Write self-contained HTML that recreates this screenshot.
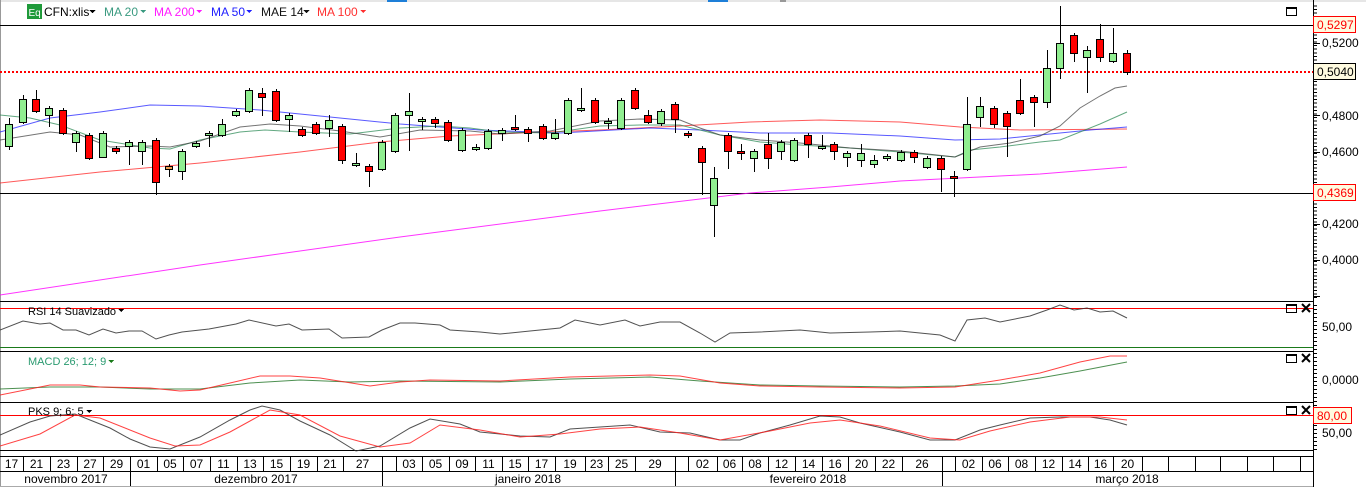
<!DOCTYPE html>
<html><head><meta charset="utf-8"><style>
html,body{margin:0;padding:0;background:#fff;width:1366px;height:487px;overflow:hidden;font-family:"Liberation Sans",Arial,sans-serif}
svg text{font-family:"Liberation Sans",Arial,sans-serif;font-size:12px}
</style></head><body>
<svg id="s" width="1366" height="487" xmlns="http://www.w3.org/2000/svg" shape-rendering="crispEdges">
<rect x="0" y="0" width="1366" height="2" fill="#e6e6e6"/>
<rect x="387" y="0" width="20" height="2" fill="#1e7fd8"/>
<rect x="708" y="0" width="20" height="2" fill="#1e7fd8"/>
<rect x="780" y="0" width="6" height="2" fill="#999"/>
<rect x="0" y="0" width="1" height="487" fill="#999"/>
<rect x="27" y="4" width="15" height="15" fill="#1f9a3a"/>
<text x="28.5" y="16" fill="#fff" style="font-size:10px">Eq</text>
<text x="44" y="16" fill="#000">CFN:xlis</text><path d="M89 10h7l-3.5 3z" fill="#000"/>
<text x="104" y="16" fill="#3a9a80">MA 20</text><path d="M140 10h6l-3 3z" fill="#3a9a80"/>
<text x="154" y="16" fill="#ff1aff">MA 200</text><path d="M196 10h6l-3 3z" fill="#ff1aff"/>
<text x="211" y="16" fill="#2020ff">MA 50</text><path d="M246 10h6l-3 3z" fill="#2020ff"/>
<text x="261" y="16" fill="#111">MAE 14</text><path d="M303 10h7l-3.5 3z" fill="#111"/>
<text x="317" y="16" fill="#ff3030">MA 100</text><path d="M360 10h6l-3 3z" fill="#ff3030"/>
<g id="g"></g>
</svg>
<script>
var g=document.getElementById('g'),h='';
function L(x1,y1,x2,y2,c,w){h+='<line x1="'+x1+'" y1="'+y1+'" x2="'+x2+'" y2="'+y2+'" stroke="'+c+'" stroke-width="'+(w||1)+'"/>';}
function P(pts,c,w,o){h+='<polyline fill="none" shape-rendering="auto" stroke="'+c+'" stroke-width="'+(w||1)+'" stroke-opacity="'+(o||1)+'" points="'+pts.map(function(p){return p.join(',')}).join(' ')+'"/>';}
function T(x,y,s,c,a,fs){h+='<text x="'+x+'" y="'+y+'" fill="'+(c||'#000')+'"'+(a?' text-anchor="'+a+'"':'')+(fs?' style="font-size:'+fs+'px"':'')+'>'+s+'</text>';}
L(0,25.5,1313,25.5,'#000');L(0,193.5,1313,193.5,'#000');
h+='<line x1="0" y1="72" x2="1313" y2="72" stroke="#f00" stroke-width="2" stroke-dasharray="2,2"/>';
P([[0,295],[200,265],[400,237],[600,211],[700,199],[750,193],[830,187],[900,181],[960,178],[1040,174],[1127,167]],'#f0f',1,0.8);
P([[0,183],[100,172],[200,163],[300,152],[380,142],[450,136],[520,133],[600,130],[680,126],[750,122],[820,120],[900,122],[960,127],[1020,130],[1127,129]],'#f22',1,0.75);
P([[0,132],[50,118],[100,112],[150,105],[200,106],[260,110],[330,117],[400,124],[480,130],[560,133],[650,128],[700,130],[760,133],[830,133],[900,136],[955,140],[1000,139],[1050,134],[1090,130],[1127,127]],'#22f',1,0.75);
P([[0,115],[30,118],[60,125],[100,140],[150,148],[170,149],[200,140],[240,132],[265,130],[300,132],[350,134],[400,128],[440,126],[470,128],[500,132],[550,133],[600,126],[640,125],[680,125],[720,135],[760,142],[800,145],[850,148],[900,152],[955,157],[970,150],[1000,147],[1040,142],[1060,140],[1080,132],[1100,124],[1127,112]],'#2e8b57',1,0.75);
P([[0,140],[50,132],[80,135],[110,147],[150,146],[170,147],[200,141],[240,127],[270,124],[300,126],[340,131],[380,137],[420,130],[470,131],[500,134],[550,131],[600,121],[640,119],[680,120],[700,128],[720,135],[760,140],[800,143],[850,148],[900,151],[955,157],[980,147],[1010,143],[1040,136],[1060,126],[1080,108],[1100,96],[1115,88],[1127,86]],'#444',1,0.75);
var C=[[9,124,146,118,150,'g'],[23,99,122,95,124,'g'],[36,99,111,90,113,'r'],[49,108,115,106,127,'g'],[63,110,133,108,135,'r'],[76,133,142,131,152,'g'],[89,135,158,133,160,'r'],[103,133,157,131,158,'g'],[116,148,151,146,154,'r'],[129,142,146,140,165,'g'],[142,142,151,140,165,'g'],[156,140,182,138,195,'r'],[169,166,169,164,177,'o'],[182,151,171,149,180,'g'],[196,143,146,141,148,'g'],[209,133,135,131,147,'g'],[222,124,135,119,137,'g'],[236,111,115,109,117,'g'],[249,90,111,88,113,'g'],[262,93,97,88,116,'r'],[276,91,120,89,122,'r'],[289,115,119,113,132,'g'],[302,129,135,127,137,'r'],[316,124,133,122,135,'r'],[329,120,128,115,137,'g'],[342,126,160,124,164,'r'],[356,163,165,153,167,'g'],[369,166,171,164,187,'r'],[382,142,169,140,171,'g'],[395,115,151,113,153,'g'],[409,111,115,93,151,'g'],[422,119,121,117,130,'g'],[435,119,123,117,128,'r'],[448,122,140,120,142,'r'],[462,130,150,128,152,'g'],[476,147,149,144,151,'g'],[488,131,148,129,150,'g'],[502,130,133,128,141,'g'],[515,127,129,115,131,'r'],[528,129,133,127,142,'r'],[543,126,138,124,140,'r'],[555,133,138,119,140,'g'],[568,100,133,98,135,'g'],[581,108,110,88,112,'g'],[595,100,122,98,124,'r'],[608,121,123,118,129,'g'],[621,100,128,98,130,'g'],[635,90,108,88,110,'r'],[648,115,122,110,124,'r'],[661,111,123,109,126,'g'],[675,104,119,102,133,'r'],[688,133,135,131,138,'r'],[702,148,162,146,195,'r'],[714,178,205,167,237,'g'],[728,135,151,133,169,'r'],[741,151,153,144,160,'r'],[754,151,158,149,172,'g'],[768,144,158,133,169,'r'],[781,142,151,140,160,'g'],[794,140,160,138,162,'g'],[808,135,144,133,158,'r'],[822,146,148,135,150,'g'],[834,144,151,142,160,'r'],[847,153,157,151,167,'g'],[861,153,160,144,167,'g'],[874,160,164,155,168,'g'],[887,156,158,154,161,'g'],[901,152,160,150,162,'g'],[914,152,157,150,163,'r'],[927,158,167,156,169,'g'],[941,158,169,156,192,'r'],[954,176,178,171,197,'r'],[967,124,169,97,171,'g'],[980,106,117,97,127,'g'],[994,108,124,106,128,'r'],[1007,113,126,111,157,'r'],[1020,100,113,79,115,'r'],[1034,97,102,95,127,'r'],[1047,68,102,50,108,'g'],[1060,43,68,6,79,'g'],[1074,35,53,33,62,'r'],[1087,50,57,46,93,'g'],[1100,39,57,24,62,'r'],[1113,53,61,28,63,'g'],[1127,53,72,50,75,'r']];
C.forEach(function(c){var x=c[0]+0.5;L(x,c[3],x,c[4],'#000');
var f=c[5]=='g'?'#90ee90':(c[5]=='r'?'#f00':'#f0a050');
h+='<rect x="'+(c[0]-3.5)+'" y="'+(c[1]+0.5)+'" width="7" height="'+Math.max(2,c[2]-c[1])+'" fill="'+f+'" stroke="#000" stroke-width="1"/>';});
[301.5,351.5,402.5,450.5,456.5].forEach(function(y){L(0,y,1313,y,'#000');});
L(0,471.5,1313,471.5,'#000');
L(0,308.5,1313,308.5,'#f00');L(0,347.5,1313,347.5,'#1a7a1a');
P([[0,330],[23,321],[40,324],[50,323],[63,330],[76,330],[89,335],[103,329],[116,333],[129,331],[142,331],[156,339],[169,335],[182,332],[209,329],[236,324],[249,320],[276,326],[289,324],[302,330],[329,329],[342,338],[369,337],[382,330],[400,323],[415,323],[440,325],[450,330],[480,332],[500,334],[530,331],[560,328],[575,320],[600,325],[625,320],[640,326],[660,322],[680,322],[700,333],[715,342],[730,333],[760,332],[800,330],[830,333],[870,332],[900,331],[940,335],[955,341],[967,320],[985,318],[1000,322],[1030,316],[1047,310],[1060,305],[1074,310],[1087,308],[1100,312],[1113,311],[1127,318]],'#333',1,0.85);
T(28,315,'RSI 14 Suavizado','#000',null,11);h+='<path d="M118 309h6l-3 3z"/>';
P([[0,389],[50,387],[100,387],[150,389],[200,389],[250,383],[300,380],[350,382],[400,381],[500,382],[570,379],[650,377],[700,381],[760,385],[820,386],[900,387],[955,386],[1000,384],[1040,378],[1080,371],[1127,362]],'#2e7d32',1,0.85);
P([[0,395],[50,385],[80,385],[100,387],[150,388],[180,391],[200,390],[230,383],[260,376],[290,376],[320,378],[370,386],[400,382],[430,380],[500,381],[570,377],[650,375],[680,376],[720,383],[760,386],[820,387],[900,388],[955,387],[1000,380],[1040,373],[1080,362],[1110,356],[1127,356]],'#f22',1,0.85);
T(28,365,'MACD 26; 12; 9','#2a9a70',null,11);h+='<path d="M108 360h6l-3 3z" fill="#1a7a1a"/>';
L(0,415.5,1313,415.5,'#f00');
P([[0,435],[30,422],[50,416],[75,414],[90,420],[110,428],[130,439],[150,447],[170,449],[200,437],[230,420],[250,410],[262,406],[280,410],[300,421],[330,435],[356,451],[380,446],[410,428],[430,419],[460,424],[480,432],[520,436],[550,437],[570,429],[600,427],[630,425],[660,432],[690,433],[720,440],[740,440],[760,433],[790,425],[820,416],[840,417],[860,423],[900,432],[930,440],[955,440],[980,430],[1000,425],[1030,418],[1060,417],[1090,417],[1110,420],[1127,425]],'#333',1,0.85);
P([[0,446],[40,434],[75,415],[100,418],[150,438],[175,446],[200,445],[230,432],[270,410],[300,415],[340,436],[380,447],[410,443],[440,425],[480,430],[520,437],[560,434],[600,429],[640,427],[680,433],[720,440],[770,431],[810,423],[840,420],[880,426],[930,438],[960,440],[990,431],[1030,422],[1070,417],[1100,417],[1127,420]],'#f22',1,0.85);
T(28,415,'PKS 9; 6; 5','#000',null,11);h+='<path d="M86 410h6l-3 3z"/>';
var B=[0,23,50,77,103,130,157,183,210,237,263,290,317,343,382,396,422,449,475,502,528,555,585,608,635,675,688,717,742,768,795,822,848,875,902,942,955,982,1008,1035,1062,1088,1113,1142,1168,1195,1220,1247,1273,1300,1313];
var Lb=['17','21','23','27','29','01','05','07','11','13','15','19','21','27','','03','05','09','11','15','17','19','23','25','29','','02','06','08','12','14','16','20','22','26','','02','06','08','12','14','16','20'];
for(var i=0;i<B.length-1;i++){if(i>0)L(B[i]+0.5,457,B[i]+0.5,471,'#000');if(Lb[i])T((B[i]+B[i+1])/2,468,Lb[i],'#000','middle');}
[130,382,675,942].forEach(function(x){L(x+0.5,471,x+0.5,487,'#000');});
T(66,483,'novembro 2017','#000','middle');T(256,483,'dezembro 2017','#000','middle');T(528,483,'janeiro 2018','#000','middle');T(808,483,'fevereiro 2018','#000','middle');T(1127,483,'março 2018','#000','middle');
L(0,486.5,1313,486.5,'#aaa');
L(1313.5,0,1313.5,487,'#000');
for(var y=6;y<300;y+=3.6){L(1314,y,1317,y,'#000');}
for(var y=43;y<300;y+=36.2){L(1314,Math.round(y)+.5,1320,Math.round(y)+.5,'#000');}
for(var y=305;y<450;y+=4){L(1314,y+.5,1317,y+.5,'#000');}
var ax=[[43,'0,5200'],[116,'0,4800'],[152,'0,4600'],[224,'0,4200'],[260,'0,4000'],[327,'50,00'],[380,'0,0000'],[433,'50,00']];
ax.forEach(function(a){T(1322,a[0]+4,a[1],'#000');});
function box(y,s,bc,tc){h+='<rect x="1313.5" y="'+(y-8.5)+'" width="42" height="16" fill="#fffbe0" stroke="'+bc+'"/>';T(1317,y+4,s,tc);}
box(25,'0,5297','#f00','#f00');box(72,'0,5040','#000','#000');box(193,'0,4369','#f00','#f00');
h+='<rect x="1313.5" y="407.5" width="38" height="16" fill="#fffbe0" stroke="#f00"/>';T(1317,420,'80,00','#f00');
function win(x,y){h+='<rect x="'+(x+.5)+'" y="'+(y+.5)+'" width="10" height="8" fill="none" stroke="#000"/><rect x="'+x+'" y="'+y+'" width="11" height="2" fill="#000"/>';}
function cls(x,y){h+='<path d="M'+x+' '+y+'l8 8M'+(x+8)+' '+y+'l-8 8" stroke="#000" stroke-width="2" shape-rendering="auto"/>';}
win(1286,7);win(1286,304);cls(1302,304);win(1286,354);cls(1302,354);win(1286,406);cls(1302,406);
g.innerHTML=h;
</script>
</body></html>
